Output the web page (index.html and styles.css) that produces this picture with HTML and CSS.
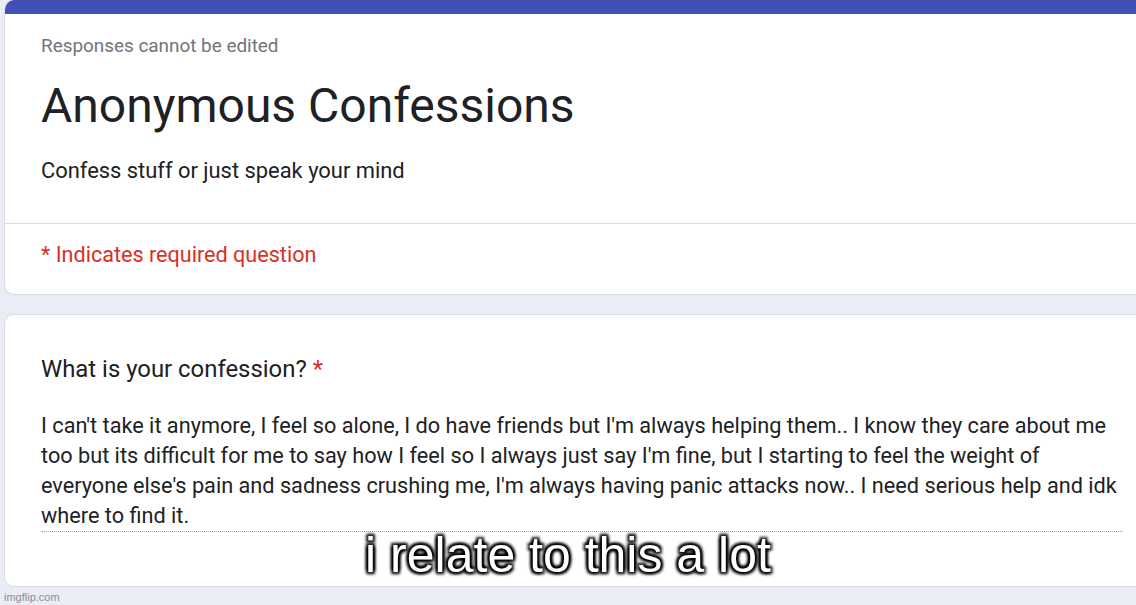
FILE: index.html
```html
<!DOCTYPE html>
<html lang="en">
<head>
  <meta charset="UTF-8" />
  <title>Anonymous Confessions</title>
  <link rel="stylesheet" href="styles.css">
</head>
<body>
  <div class="page">
    <div class="card header-card">
      <div class="accent"></div>
      <div class="header-body">
        <p class="note">Responses cannot be edited</p>
        <h1>Anonymous Confessions</h1>
        <p class="desc">Confess stuff or just speak your mind</p>
      </div>
      <p class="required">* Indicates required question</p>
    </div>

    <div class="card question-card">
      <p class="q-title">What is your confession? <span class="star">*</span></p>
      <p class="answer">I can't take it anymore, I feel so alone, I do have friends but I'm always helping them.. I know they care about me too but its difficult for me to say how I feel so I always just say I'm fine, but I starting to feel the weight of everyone else's pain and sadness crushing me, I'm always having panic attacks now.. I need serious help and idk where to find it.</p>
    </div>

    <p class="credit">imgflip.com</p>
    <p class="caption">i relate to this a lot</p>
  </div>
</body>
</html>
```

FILE: styles.css
```css
* {
  box-sizing: border-box;
}

body {
  margin: 0;
  padding: 0;
  background-color: #eaecf6;
  color: #202124;
  font-family: Roboto, 'Liberation Sans', sans-serif;
  overflow: hidden;
}

p, h1 {
  margin: 0;
}

.page {
  position: relative;
  width: 1136px;
  height: 605px;
  overflow: hidden;
  display: flex;
  flex-direction: column;
  gap: 19px;
}

.card {
  width: 1160px;
  margin-left: 4px;
  background-color: #fff;
  border: 1px solid #dadce0;
  border-radius: 10px;
}

.header-card {
  border-top: none;
  overflow: hidden;
}

.accent {
  height: 14px;
  background-color: #3f51b5;
}

.header-body {
  padding: 20px 36px 38px;
  border-bottom: 1px solid #dadce0;
}

.note {
  font-size: 18.9px;
  line-height: 24px;
  color: #70757a;
}

h1 {
  font-size: 48px;
  font-weight: 400;
  line-height: 56px;
  margin-top: 20px;
}

.desc {
  font-size: 21.9px;
  line-height: 28px;
  margin-top: 23px;
}

.required {
  padding: 17px 36px 25px;
  font-size: 21.6px;
  line-height: 28px;
  color: #d93025;
}

.question-card {
  padding: 39px 14px 54px 36px;
}

.q-title {
  font-size: 23.9px;
  line-height: 30px;
}

.star {
  color: #d93025;
}

.answer {
  margin-top: 27px;
  width: 1082px;
  font-size: 21.7px;
  line-height: 30px;
  border-bottom: 1px dotted #9aa0a6;
}

.credit {
  position: absolute;
  left: 4px;
  bottom: 2px;
  font-family: 'Liberation Sans', Arial, sans-serif;
  font-size: 11px;
  color: #8b8e95;
}

.caption {
  position: absolute;
  left: 0;
  right: 0;
  top: 530px;
  text-align: center;
  font-family: 'Liberation Sans', Arial, sans-serif;
  font-size: 50px;
  line-height: 1;
  color: #fff;
  text-shadow: 2px 2px 3px #000, -2px -2px 3px #000, 2px -2px 3px #000, -2px 2px 3px #000, 0 0 4px #000;
}
```
